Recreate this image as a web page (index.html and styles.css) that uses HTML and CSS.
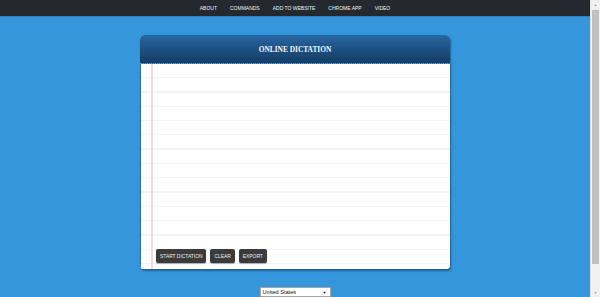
FILE: index.html
```html
<!DOCTYPE html>
<html>
<head>
<meta charset="utf-8">
<link rel="stylesheet" href="styles.css">
</head>
<body>
<div class="page">
  <div class="viewport">
    <nav class="topnav">
      <a>ABOUT</a>
      <a>COMMANDS</a>
      <a>ADD TO WEBSITE</a>
      <a>CHROME APP</a>
      <a>VIDEO</a>
    </nav>
    <main class="main">
      <section class="card">
        <header class="card-head">ONLINE DICTATION</header>
        <div class="paper">
          <div class="buttons">
            <button class="btn">START DICTATION</button>
            <button class="btn">CLEAR</button>
            <button class="btn">EXPORT</button>
          </div>
        </div>
      </section>
      <div class="lang">
        <span class="lang-text">United States</span>
        <span class="lang-arrow">▼</span>
      </div>
    </main>
  </div>
  <div class="scrollbar">
    <div class="sb-arrow">▲</div>
    <div class="sb-track"><div class="sb-thumb"></div></div>
    <div class="sb-arrow">▼</div>
  </div>
</div>
</body>
</html>
```

FILE: styles.css
```css
html, body {
  margin: 0;
  padding: 0;
  height: 297px;
  overflow: hidden;
  background: #3596db;
  font-family: "Liberation Sans", Arial, sans-serif;
}

.page {
  display: flex;
  height: 297px;
}

.viewport {
  flex: 1;
  display: flex;
  flex-direction: column;
  min-width: 0;
}

.topnav {
  height: 17px;
  background: #23292e;
  border-bottom: 1px solid #2f7fc1;
  display: flex;
  justify-content: center;
  align-items: center;
  gap: 13px;
}

.topnav a {
  color: #f2f4f5;
  font-size: 5px;
  line-height: 1;
}

.main {
  display: flex;
  flex-direction: column;
  align-items: center;
  padding-top: 18px;
}

.card {
  width: 310px;
  height: 234px;
  display: flex;
  flex-direction: column;
  border-radius: 4px;
  box-shadow: 1px 2px 2px rgba(0, 0, 0, 0.35);
  background: #fff;
  overflow: hidden;
}

.card-head {
  height: 28px;
  background: linear-gradient(#2a69a2, #1d5287 45%, #153d65);
  border-bottom: 1px dotted #7396b6;
  color: #f4f6f8;
  font-family: "Liberation Serif", "Times New Roman", serif;
  font-weight: bold;
  font-size: 7.4px;
  display: flex;
  align-items: center;
  justify-content: center;
}

.paper {
  flex: 1;
  border-left: 1px solid #2a6ea8;
  background:
    linear-gradient(90deg, transparent 10px, #ecdcdc 10px, #ecdcdc 12px, transparent 12px),
    repeating-linear-gradient(180deg, #ffffff 0px, #ffffff 13px, #f3f4f7 13px, #f3f4f7 14.3px);
  display: flex;
  flex-direction: column;
  justify-content: flex-end;
  padding: 0 0 6px 15px;
}

.buttons {
  display: flex;
  gap: 4px;
}

.btn {
  height: 14px;
  padding: 0 4px;
  border: none;
  border-radius: 2px;
  background: #3b3b3b;
  color: #f0f0f0;
  font-family: "Liberation Sans", Arial, sans-serif;
  font-size: 4.9px;
  box-shadow: 0 1px 1px rgba(0, 0, 0, 0.3);
}

.lang {
  margin-top: 18px;
  width: 71px;
  height: 10px;
  background: #fff;
  border: 1px solid #a6a6a6;
  box-sizing: border-box;
  display: flex;
  align-items: center;
  justify-content: space-between;
  padding: 0 3px 0 2px;
  font-size: 5.6px;
  color: #111;
}

.lang-arrow {
  font-size: 4px;
}

.scrollbar {
  width: 9px;
  background: #f0f0f0;
  display: flex;
  flex-direction: column;
  border-left: 1px solid #e4e4e4;
}

.sb-arrow {
  height: 9px;
  font-size: 3px;
  color: #777;
  display: flex;
  align-items: center;
  justify-content: center;
}

.sb-track {
  flex: 1;
  padding: 1px;
  display: flex;
  flex-direction: column;
}

.sb-thumb {
  height: 254px;
  background: #c1c1c1;
}
```
